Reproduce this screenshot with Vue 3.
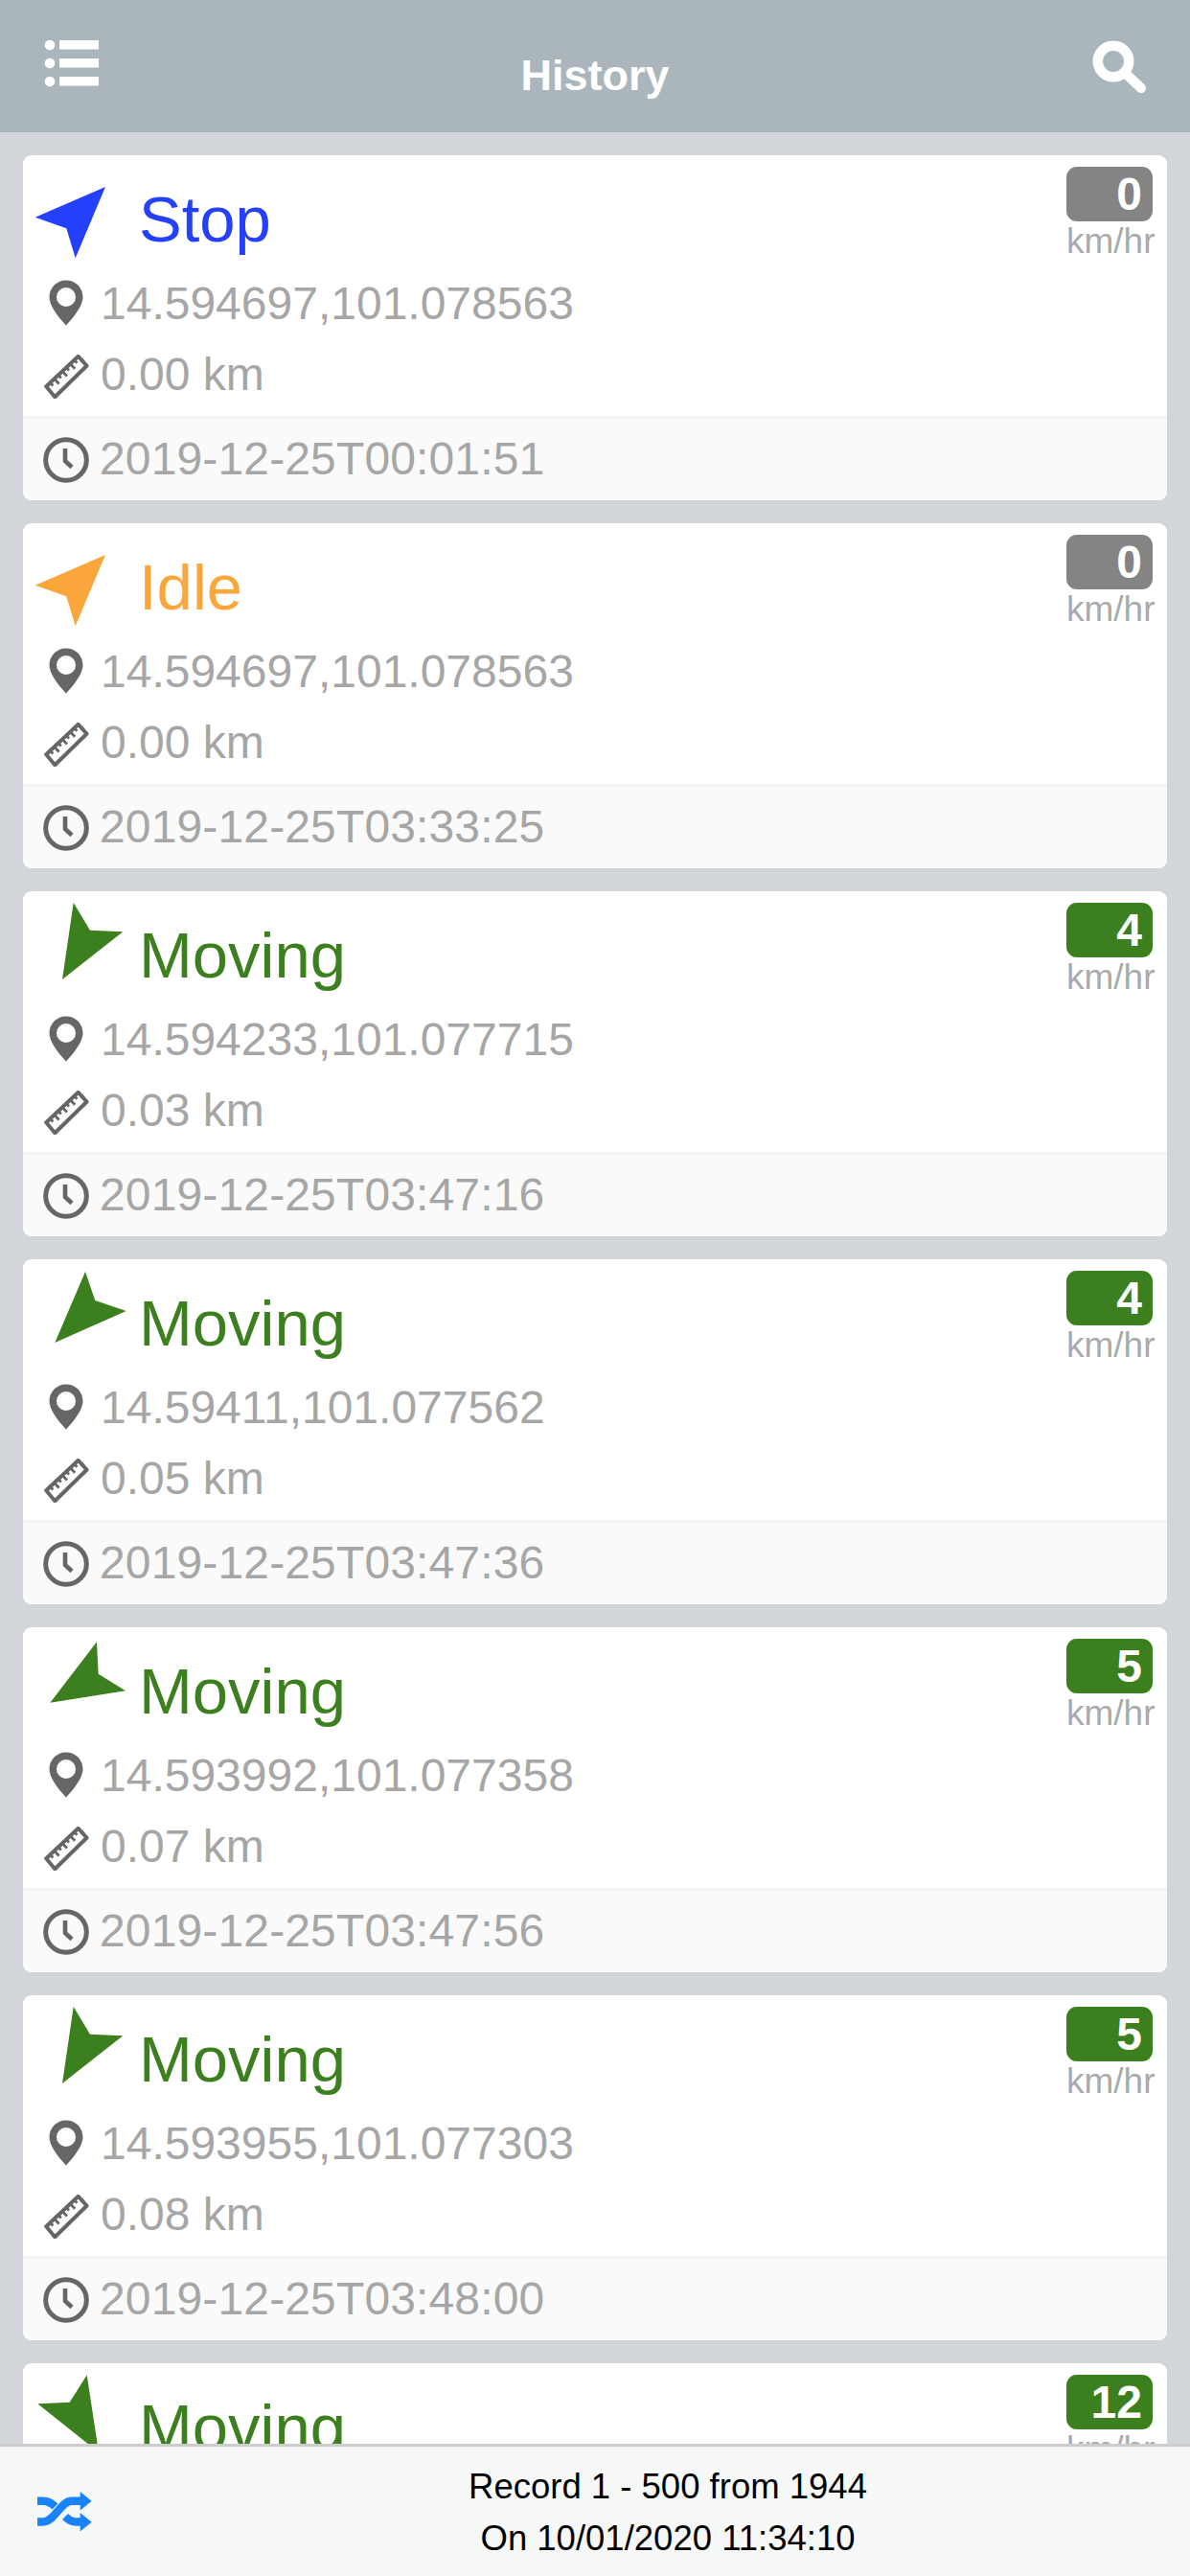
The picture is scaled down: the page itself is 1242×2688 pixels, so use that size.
<script setup>
const arrowA = '52.7,12 70,40.7 104.3,42.3 41,92'
const cards = [
  { tone: 'stop', label: 'Stop', speed: 0, arrow: '86,33 12.7,64.7 45.3,76.3 54.7,107.3', coord: '14.594697,101.078563', dist: '0.00 km', time: '2019-12-25T00:01:51' },
  { tone: 'idle', label: 'Idle', speed: 0, arrow: '86,33 12.7,64.7 45.3,76.3 54.7,107.3', coord: '14.594697,101.078563', dist: '0.00 km', time: '2019-12-25T03:33:25' },
  { tone: 'moving', label: 'Moving', speed: 4, arrow: arrowA, coord: '14.594233,101.077715', dist: '0.03 km', time: '2019-12-25T03:47:16' },
  { tone: 'moving', label: 'Moving', speed: 4, arrow: '65,13 75.3,43 107.7,54 33.3,87', coord: '14.59411,101.077562', dist: '0.05 km', time: '2019-12-25T03:47:36' },
  { tone: 'moving', label: 'Moving', speed: 5, arrow: '77,15.3 78.7,48.7 107,66.3 28.3,78.7', coord: '14.593992,101.077358', dist: '0.07 km', time: '2019-12-25T03:47:56' },
  { tone: 'moving', label: 'Moving', speed: 5, arrow: arrowA, coord: '14.593955,101.077303', dist: '0.08 km', time: '2019-12-25T03:48:00' },
  { tone: 'moving', label: 'Moving', speed: 12, arrow: '66.7,12.3 48.7,40.7 15.3,42.3 79,93' }
]
</script>

<template>
  <div class="page">
    <header class="topbar">
      <svg class="list-icon" width="58" height="50" viewBox="0 0 58 50">
        <g fill="#fff">
          <circle cx="6" cy="5" r="5.3" />
          <circle cx="6" cy="24" r="5.3" />
          <circle cx="6" cy="43" r="5.3" />
          <rect x="16" y="0" width="41" height="9.5" />
          <rect x="16" y="19" width="41" height="9.5" />
          <rect x="16" y="38" width="41" height="9.5" />
        </g>
      </svg>
      <h1 class="page-title">History</h1>
      <svg class="search-icon" width="58" height="58" viewBox="0 0 58 58">
        <circle cx="22" cy="22" r="16.2" fill="none" stroke="#fff" stroke-width="10.5" />
        <path d="M34 34 L51 50" fill="none" stroke="#fff" stroke-width="10" stroke-linecap="round" />
      </svg>
    </header>

    <main class="list">
      <article v-for="(c, i) in cards" :key="i" class="card" :class="c.tone">
        <div class="head">
          <svg class="arrow" width="118" height="116" viewBox="0 0 118 116">
            <polygon :points="c.arrow" fill="currentColor" />
          </svg>
          <span class="label">{{ c.label }}</span>
          <div class="speed">
            <span class="badge">{{ c.speed }}</span>
            <span class="unit">km/hr</span>
          </div>
        </div>
        <template v-if="c.coord">
          <div class="row">
            <svg class="row-icon" width="48" height="48" viewBox="0 0 48 48">
              <path fill="#666" fill-rule="evenodd" d="M24 .5C14.3.5 6.5 8.3 6.5 18 6.5 30 24 47.5 24 47.5S41.5 30 41.5 18C41.5 8.3 33.7.5 24 .5ZM24 8a10 10 0 1 1 0 20 10 10 0 0 1 0-20Z" />
            </svg>
            <span>{{ c.coord }}</span>
          </div>
          <div class="row">
            <svg class="row-icon" width="48" height="48" viewBox="0 0 48 48">
              <g fill="none" stroke="#666">
                <polygon points="3.2,35.3 36.7,3.8 45.5,13.7 12.3,46.2" stroke-width="4" stroke-linejoin="round" />
                <path stroke-width="2.8" d="M7.4 31.4l3 3M11.6 27.4l5 5M15.8 23.5l3 3M20 19.6l5 5M24.1 15.6l3 3M28.3 11.7l5 5M32.5 7.7l3 3" />
              </g>
            </svg>
            <span class="lifted">{{ c.dist }}</span>
          </div>
          <div class="stamp">
            <svg class="row-icon" width="48" height="48" viewBox="0 0 48 48">
              <circle cx="24" cy="24" r="21.3" fill="none" stroke="#666" stroke-width="5" />
              <path d="M23 12V25L30 31.5" fill="none" stroke="#666" stroke-width="4.6" />
            </svg>
            <span class="lifted">{{ c.time }}</span>
          </div>
        </template>
      </article>
    </main>

    <footer class="pager">
      <div class="shuffle-slot">
        <svg width="57" height="42" viewBox="0 0 57 42">
          <g fill="none" stroke="#1a82fb" stroke-width="8.4">
            <path d="M0 31.5H6C18 31.5 24 9.7 36 9.7H46" />
            <path d="M0 9.7H6C11 9.7 15 12 18.5 15.5" />
            <path d="M29 26C33 30 36 31.5 40 31.5H46" />
          </g>
          <polygon points="44.7,0 56.7,9.7 44.7,19.4" fill="#1a82fb" />
          <polygon points="44.7,22 56.7,31.7 44.7,41.6" fill="#1a82fb" />
        </svg>
      </div>
      <div class="pager-text">
        <div>Record 1 - 500 from 1944</div>
        <div>On 10/01/2020 11:34:10</div>
      </div>
    </footer>
  </div>
</template>

<style scoped>
.page {
  width: 1242px;
  height: 2688px;
  display: flex;
  flex-direction: column;
  overflow: hidden;
  background: #d2d6db;
  font-family: "Liberation Sans", Arial, sans-serif;
}
.topbar {
  height: 138px;
  flex: none;
  display: grid;
  grid-template-columns: 1fr auto 1fr;
  align-items: start;
  background: #abb6bc;
}
.list-icon { margin: 42px 0 0 46px; }
.search-icon { margin: 42px 44px 0 0; justify-self: end; }
.page-title {
  margin: 53px 0 0;
  font-size: 45px;
  line-height: 52px;
  font-weight: 700;
  color: #fff;
}
.list {
  flex: 1;
  min-height: 0;
  overflow: hidden;
  display: flex;
  flex-direction: column;
  gap: 24px;
  padding: 24px 24px 0;
}
.card {
  flex: none;
  background: #fff;
  border-radius: 9px;
  overflow: hidden;
}
.stop { color: #2540fb; }
.idle { color: #fba63a; }
.moving { color: #3b7f1e; }
.head {
  height: 116px;
  display: flex;
  align-items: flex-start;
}
.arrow { flex: none; }
.label {
  margin: 29px 0 0 3px;
  font-size: 67px;
  line-height: 76px;
}
.speed {
  margin-left: auto;
  margin-top: 12px;
  width: 93px;
  margin-right: 12px;
  display: flex;
  flex-direction: column;
}
.badge {
  width: 90px;
  height: 57px;
  box-sizing: border-box;
  padding-right: 11px;
  border-radius: 11px;
  font-size: 48px;
  font-weight: 700;
  line-height: 57px;
  text-align: right;
  color: #fff;
}
.stop .badge, .idle .badge { background: #848484; }
.moving .badge { background: #3b7f1e; }
.unit {
  font-size: 37px;
  line-height: 42px;
  color: #aaa;
  white-space: nowrap;
}
.row, .stamp {
  display: flex;
  align-items: center;
  font-size: 48px;
  color: #a6a6a6;
}
.row { height: 76px; }
.row-icon { flex: none; margin: 0 12px 0 21px; }
.lifted { padding-bottom: 3px; }
.stamp {
  height: 85px;
  margin-top: 4px;
  border-top: 3px solid #f2f2f2;
  background: #fafafa;
  letter-spacing: .14px;
}
.stamp .row-icon { margin-right: 11px; }
.pager {
  height: 138px;
  flex: none;
  box-sizing: border-box;
  border-top: 3px solid #cccccc;
  background: #f6f8f8;
  display: flex;
  align-items: center;
}
.shuffle-slot {
  width: 152px;
  flex: none;
  box-sizing: border-box;
  padding-left: 39px;
  display: flex;
}
.pager-text {
  flex: 1;
  padding-top: 2px;
  text-align: center;
  font-size: 36.5px;
  line-height: 54px;
  color: #000;
}
</style>
